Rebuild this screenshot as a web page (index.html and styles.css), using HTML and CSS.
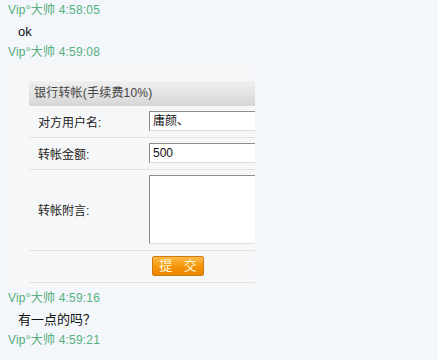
FILE: index.html
```html
<!DOCTYPE html>
<html>
<head>
<meta charset="utf-8">
<link rel="stylesheet" href="styles.css">
</head>
<body>
<div class="msg-head">Vip°大帅 4:58:05</div>
<div class="msg-body">ok</div>
<div class="msg-head">Vip°大帅 4:59:08</div>
<div class="panel">
  <div class="panel-title">银行转帐(手续费10%)</div>
  <div class="row">
    <div class="label">对方用户名:</div>
    <div class="field"><div class="input">庸颜、</div></div>
  </div>
  <div class="row">
    <div class="label">转帐金额:</div>
    <div class="field"><div class="input">500</div></div>
  </div>
  <div class="row">
    <div class="label">转帐附言:</div>
    <div class="field"><div class="input textarea"></div></div>
  </div>
  <div class="row">
    <div class="label"></div>
    <div class="field"><div class="btn">提&nbsp;交</div></div>
  </div>
</div>
<div class="msg-head">Vip°大帅 4:59:16</div>
<div class="msg-body">有一点的吗？</div>
<div class="msg-head">Vip°大帅 4:59:21</div>
</body>
</html>
```
FILE: styles.css
```css
html, body {
  margin: 0;
  padding: 0;
}
body {
  background: #f3f6fa;
  font-family: "Liberation Sans", "Noto Sans CJK SC", sans-serif;
  font-size: 12px;
  color: #111;
  width: 438px;
  height: 360px;
  overflow: hidden;
}
.msg-head {
  padding-left: 8px;
  height: 21px;
  line-height: 21px;
  color: #55b07f;
  font-size: 12px;
  letter-spacing: 0.2px;
}
.msg-body {
  padding-left: 18px;
  height: 21px;
  line-height: 21px;
  font-size: 13px;
  color: #111;
}
.panel {
  margin-left: 8px;
  width: 247px;
  box-sizing: border-box;
  padding: 18px 0 5px 21px;
  background: #f6f7f8;
  overflow: hidden;
}
.panel-title {
  height: 25px;
  line-height: 25px;
  padding-left: 5px;
  color: #444;
  font-size: 12px;
  letter-spacing: 0.2px;
  background: linear-gradient(#f0f0f0, #d6d6d6);
}
.row {
  display: flex;
  align-items: center;
  padding: 5px 0 6px;
  border-bottom: 1px solid #e2e2e2;
}
.label {
  width: 111px;
  flex: none;
  padding-left: 9px;
  color: #222;
  font-size: 12px;
}
.field {
  flex: none;
  width: 200px;
}
.input {
  height: 18px;
  line-height: 18px;
  padding-left: 3px;
  background: #fff;
  border-top: 1px solid #8c8c8c;
  border-left: 1px solid #8c8c8c;
  border-bottom: 1px solid #dedede;
  border-right: 1px solid #dedede;
  font-size: 12px;
  color: #111;
}
.textarea {
  height: 67px;
}
.btn {
  margin-left: 3px;
  width: 50px;
  height: 18px;
  line-height: 18px;
  text-align: center;
  color: #fff6d8;
  font-size: 13px;
  letter-spacing: 4px;
  text-indent: 4px;
  background: linear-gradient(#fdbb45, #f39205 60%, #ee8600);
  border: 1px solid #cf7a12;
  border-radius: 2px;
}
```
